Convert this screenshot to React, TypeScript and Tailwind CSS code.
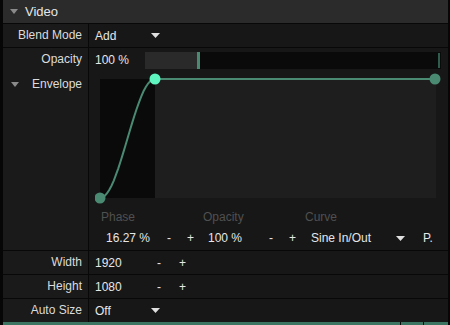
import React from 'react';

// sine in/out segment of the envelope, from bottom-left point to the first top point
const curve = Array.from({ length: 25 }, (_, i) => {
  const t = i / 24;
  const x = 5 + t * 55;
  const y = 125 - ((1 - Math.cos(Math.PI * t)) / 2) * 119;
  return `${x.toFixed(1)},${y.toFixed(1)}`;
}).join(' ');

const Caret: React.FC = () => (
  <svg width="9" height="5" viewBox="0 0 9 5" className="text-[#e0e0e0]">
    <path d="M0 0h9L4.5 5z" fill="currentColor" />
  </svg>
);

const Row: React.FC<{ label: string; children: React.ReactNode }> = ({ label, children }) => (
  <div className="flex h-[24px] border-b border-[#080808]">
    <div className="w-[86px] shrink-0 bg-[#1a1a1a] border-r border-[#080808] text-right pr-[6px] leading-[23px] text-[#dcdcdc]">
      {label}
    </div>
    <div className="flex-1 flex items-center pl-[6px] text-[#e6e6e6]">{children}</div>
  </div>
);

const App: React.FC = () => {
  return (
    <div
      className="w-[450px] h-[325px] bg-[#171717] border-l-[3px] border-r-[2px] border-[#060606] flex flex-col overflow-hidden text-[12px] select-none"
      style={{ fontFamily: '"Liberation Sans", Arial, sans-serif' }}
    >
      <div className="h-[24px] shrink-0 bg-[#2b2b2b] border-b border-[#080808] flex items-center gap-[7px] pl-[7px] text-[#e6e6e6] text-[13px]">
        <svg width="8" height="5" viewBox="0 0 8 5"><path d="M0 0h8L4 5z" fill="#8a8a8a" /></svg>
        <span>Video</span>
      </div>

      <Row label="Blend Mode">
        <span className="w-[56px]">Add</span>
        <Caret />
      </Row>

      {/* opacity + envelope block */}
      <div className="flex h-[204px] border-b border-[#080808]">
        <div className="w-[86px] shrink-0 bg-[#1a1a1a] border-r border-[#080808] text-[#dcdcdc]">
          <div className="h-[24px] leading-[23px] text-right pr-[6px]">Opacity</div>
          <div className="flex items-center justify-between pl-[8px] pr-[6px] mt-[3px]">
            <svg width="8" height="5" viewBox="0 0 8 5"><path d="M0 0h8L4 5z" fill="#8a8a8a" /></svg>
            <span>Envelope</span>
          </div>
        </div>
        <div className="flex-1 flex flex-col">
          <div className="h-[24px] flex items-center pl-[6px] text-[#e6e6e6]">
            <span className="w-[50px]">100 %</span>
            <div className="w-[296px] h-[17px] flex bg-[#0a0a0a]">
              <div className="w-[52px] bg-[#2a2a2a]" />
              <div className="w-[3px] bg-[#4a8a73]" />
              <div className="flex-1" />
              <div className="w-[2px] my-[1px] mr-[1px] bg-[#2f5d4d]" />
            </div>
          </div>
          <svg width="352" height="131" viewBox="0 0 352 131" className="ml-[6px] mt-[1px]">
            <rect x="5" y="6" width="336" height="119" fill="#1e1e1e" />
            <rect x="5" y="6" width="55" height="119" fill="#0a0a0a" />
            <polyline points={curve} fill="none" stroke="#4a8a73" strokeWidth="2" />
            <line x1="60" y1="6" x2="340" y2="6" stroke="#4a8a73" strokeWidth="2" />
            <circle cx="5" cy="125" r="5.5" fill="#4a8a73" />
            <circle cx="340" cy="6" r="5.5" fill="#4a8a73" />
            <circle cx="60" cy="6" r="5.5" fill="#5ef5c0" />
          </svg>
          <div className="flex text-[#505050] pl-[12px] mt-[5px] h-[16px] leading-[16px]">
            <span className="w-[102px]">Phase</span>
            <span className="w-[102px]">Opacity</span>
            <span>Curve</span>
          </div>
          <div className="flex items-center text-[#e6e6e6] pl-[17px] mt-[5px] h-[16px]">
            <span className="w-[61px]">16.27 %</span>
            <span className="w-[20px]">-</span>
            <span className="w-[21px]">+</span>
            <span className="w-[61px]">100 %</span>
            <span className="w-[20px]">-</span>
            <span className="w-[22px]">+</span>
            <span className="w-[85px]">Sine In/Out</span>
            <span className="w-[27px] flex"><Caret /></span>
            <span>P.</span>
          </div>
        </div>
      </div>

      <Row label="Width">
        <span className="w-[62px]">1920</span>
        <span className="w-[22px]">-</span>
        <span>+</span>
      </Row>
      <Row label="Height">
        <span className="w-[62px]">1080</span>
        <span className="w-[22px]">-</span>
        <span>+</span>
      </Row>
      <Row label="Auto Size">
        <span className="w-[56px]">Off</span>
        <Caret />
      </Row>

      <div className="flex h-[3px] gap-[1px] bg-[#0a0a0a] mt-[-1px]">
        <div className="w-[397px] bg-[#3d7563]" />
        <div className="w-[22px] bg-[#3d7563]" />
        <div className="flex-1 bg-[#3d7563]" />
      </div>
    </div>
  );
};

export default App;
